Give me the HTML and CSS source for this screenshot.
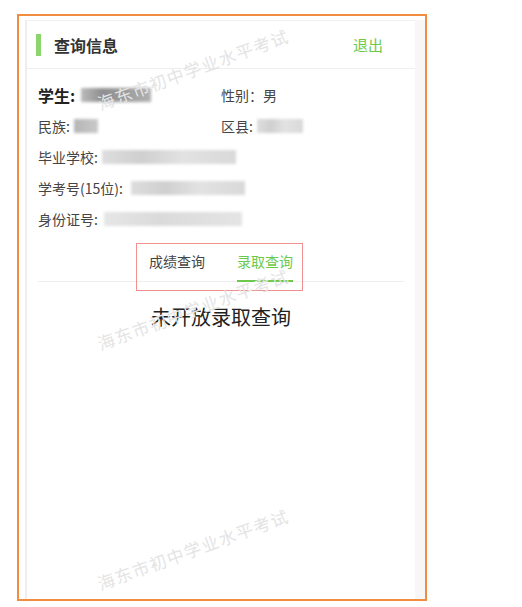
FILE: index.html
```html
<!DOCTYPE html>
<html lang="zh-CN">
  <head>
    <meta charset="UTF-8" />
    <meta name="viewport" content="width=device-width, initial-scale=1.0" />
    <title>查询信息</title>
    <link rel="stylesheet" href="styles.css">
  </head>
  <body>
    <div class="frame">
      <div class="card">
        <div class="card-header">
          <span class="header-bar"></span>
          <span class="header-title">查询信息</span>
          <a class="logout" href="#">退出</a>
        </div>

        <div class="info">
          <div class="info-row">
            <div class="info-cell"><span class="label strong">学生:</span><span class="mask mask-dark mask-name"></span></div>
            <div class="info-cell"><span class="label">性别：男</span></div>
          </div>
          <div class="info-row">
            <div class="info-cell"><span class="label">民族:</span><span class="mask mask-nation"></span></div>
            <div class="info-cell"><span class="label">区县:</span><span class="mask mask-county"></span></div>
          </div>
          <div class="info-row">
            <div class="info-cell wide"><span class="label">毕业学校:</span><span class="mask mask-school"></span></div>
          </div>
          <div class="info-row">
            <div class="info-cell wide"><span class="label">学考号(15位):</span><span class="mask mask-exam"></span></div>
          </div>
          <div class="info-row">
            <div class="info-cell wide"><span class="label">身份证号:</span><span class="mask mask-id"></span></div>
          </div>
        </div>

        <div class="tab-bar">
          <div class="tab-group">
            <span class="tab">成绩查询</span>
            <span class="tab active">录取查询</span>
          </div>
        </div>

        <div class="notice">未开放录取查询</div>

        <!-- watermark -->
        <span class="watermark wm-1">海东市初中学业水平考试</span>
        <span class="watermark wm-2">海东市初中学业水平考试</span>
        <span class="watermark wm-3">海东市初中学业水平考试</span>
      </div>
      <div class="side-strip"></div>
    </div>
  </body>
</html>
```

FILE: styles.css
```css
* {
  margin: 0;
  padding: 0;
  box-sizing: border-box;
}

body {
  font-family: "Noto Sans CJK SC", "Noto Sans", "Liberation Sans", sans-serif;
  background: #ffffff;
  color: #333333;
}

.frame {
  display: flex;
  margin: 14px 0 0 17px;
  width: 410px;
  height: 587px;
  border: 2px solid #f28c40;
  padding: 4px 0 0 6px;
  background: #ffffff;
}

.card {
  position: relative;
  flex: 1;
  background: #ffffff;
  border-left: 2px solid #eeeeee;
  border-top: 1px solid #f1f1f1;
  overflow: hidden;
}

.side-strip {
  width: 10px;
  background: #f7f7f7;
}

/* Header */
.card-header {
  display: flex;
  align-items: center;
  height: 48px;
  padding: 0 32px 0 9px;
  border-bottom: 1px solid #eeeeee;
}

.header-bar {
  width: 5px;
  height: 22px;
  background: #8cd46c;
}

.header-title {
  margin-left: 13px;
  font-size: 16px;
  font-weight: bold;
  color: #333333;
}

.logout {
  margin-left: auto;
  font-size: 15px;
  color: #6cc94a;
  text-decoration: none;
}

/* Student info */
.info {
  padding: 10px 0 0 11px;
}

.info-row {
  display: flex;
  height: 31px;
  align-items: center;
}

.info-cell {
  display: flex;
  align-items: center;
  width: 183px;
}

.info-cell.wide {
  width: auto;
}

.label {
  font-size: 14px;
  color: #444444;
  white-space: nowrap;
}

.label.strong {
  font-size: 16px;
  font-weight: bold;
  color: #222222;
}

/* Blurred values */
.mask {
  display: inline-block;
  height: 14px;
  margin-left: 4px;
  background: linear-gradient(90deg, #dddddd, #cfcfcf 30%, #e2e2e2 60%, #d9d9d9);
  filter: blur(1.5px);
}

.mask-dark {
  background: linear-gradient(90deg, #bbbbbb, #8f8f8f 30%, #9a9a9a 60%, #b0b0b0);
}

.mask-name {
  width: 70px;
  margin-left: 6px;
}

.mask-nation {
  width: 24px;
  background: linear-gradient(90deg, #b5b5b5, #c9c9c9);
}

.mask-county {
  width: 46px;
}

.mask-school {
  width: 134px;
}

.mask-exam {
  width: 114px;
  margin-left: 8px;
}

.mask-id {
  width: 138px;
  margin-left: 6px;
  background: linear-gradient(90deg, #e6e6e6, #dadada 40%, #e4e4e4);
}

/* Tabs */
.tab-bar {
  display: flex;
  justify-content: center;
  margin: 9px 11px 0 11px;
  border-bottom: 1px solid #eeeeee;
}

.tab-group {
  position: relative;
  display: flex;
  gap: 32px;
}

.tab-group::after {
  content: "";
  position: absolute;
  left: -13px;
  top: 0;
  width: 165px;
  height: 46px;
  border: 1px solid #f09090;
  pointer-events: none;
}

.tab {
  padding: 8px 0 9px;
  font-size: 14px;
  line-height: 20px;
  color: #444444;
  border-bottom: 2px solid transparent;
  margin-bottom: -1px;
}

.tab.active {
  color: #6cc94a;
  border-bottom-color: #6cc94a;
}

.notice {
  margin-top: 21px;
  text-align: center;
  font-size: 20px;
  line-height: 28px;
  color: #222222;
}

/* Watermark */
.watermark {
  position: absolute;
  left: 71px;
  font-size: 17px;
  line-height: 20px;
  letter-spacing: 1.4px;
  color: #e4e4e4;
  white-space: nowrap;
  transform-origin: 0 50%;
  transform: rotate(-20deg);
  pointer-events: none;
}

.wm-1 {
  top: 73px;
}

.wm-2 {
  top: 313px;
}

.wm-3 {
  top: 553px;
}
```
